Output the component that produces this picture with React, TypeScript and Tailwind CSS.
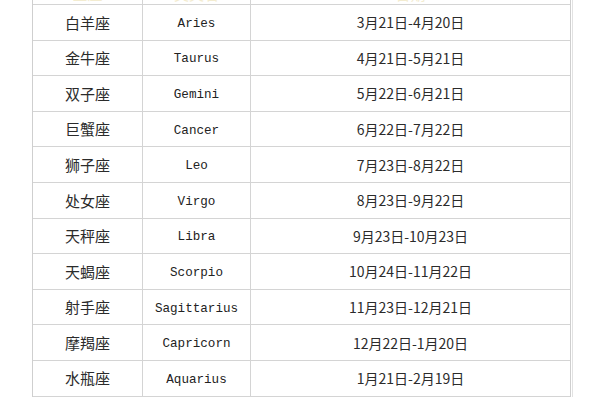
import React from 'react';

const signs = [
  ['白羊座', 'Aries', '3月21日-4月20日'],
  ['金牛座', 'Taurus', '4月21日-5月21日'],
  ['双子座', 'Gemini', '5月22日-6月21日'],
  ['巨蟹座', 'Cancer', '6月22日-7月22日'],
  ['狮子座', 'Leo', '7月23日-8月22日'],
  ['处女座', 'Virgo', '8月23日-9月22日'],
  ['天秤座', 'Libra', '9月23日-10月23日'],
  ['天蝎座', 'Scorpio', '10月24日-11月22日'],
  ['射手座', 'Sagittarius', '11月23日-12月21日'],
  ['摩羯座', 'Capricorn', '12月22日-1月20日'],
  ['水瓶座', 'Aquarius', '1月21日-2月19日'],
];

const cjk = "font-['Noto_Sans_CJK_SC',sans-serif]";

export default function App() {
  return (
    <div className="w-[600px] h-[400px] overflow-hidden bg-white pl-[32px]">
      <div className="w-[541px] -mt-[30.6px] border-r border-[#e2e2e2] pr-[2px]">
        <div className="w-[539px] border-l border-r border-[#cfcfcf]">
          {/* header row, mostly scrolled off the top */}
          <div className="grid grid-cols-[110px_108px_1fr] h-[35.6px] border-b border-[#d4d4d4] text-[#f3ecd0]">
            <div className={`flex items-end justify-center border-r border-[#d4d4d4] text-[15px] leading-none pb-[3px] ${cjk}`}>星座</div>
            <div className={`flex items-end justify-center border-r border-[#d4d4d4] text-[15px] leading-none pb-[3px] ${cjk}`}>英文名</div>
            <div className={`flex items-end justify-center text-[15px] leading-none pb-[3px] ${cjk}`}>日期</div>
          </div>
          {signs.map(([cn, en, date]) => (
            <div
              key={en}
              className="grid grid-cols-[110px_108px_1fr] h-[35.6px] border-b border-[#d4d4d4] text-[#2b2b2b]"
            >
              <div className={`flex items-center justify-center border-r border-[#d4d4d4] text-[15px] pt-[1px] ${cjk}`}>
                {cn}
              </div>
              <div className="flex items-center justify-center border-r border-[#d4d4d4] text-[12.6px] pt-[4px] font-['Liberation_Mono',monospace] text-[#222]">
                {en}
              </div>
              <div className={`flex items-center justify-center text-[14px] pt-[1px] ${cjk}`}>{date}</div>
            </div>
          ))}
        </div>
      </div>
    </div>
  );
}
